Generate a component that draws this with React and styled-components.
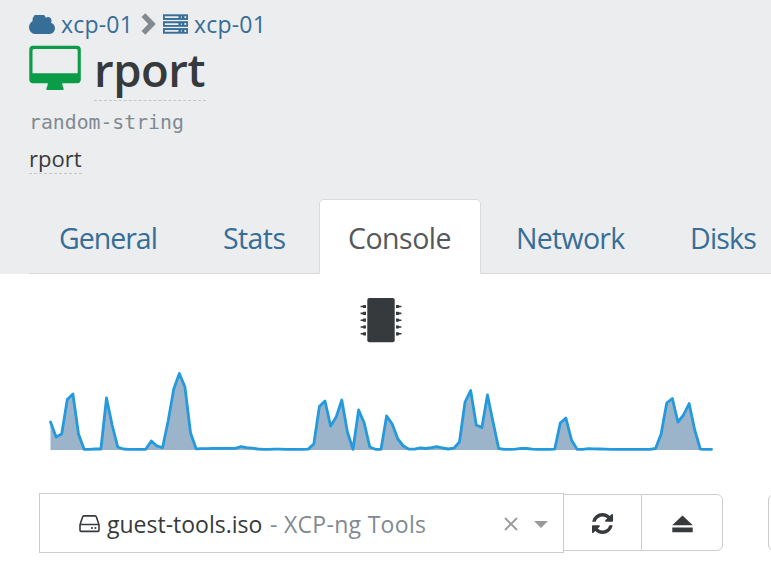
import React from "react";
import styled, { createGlobalStyle } from "styled-components";

const GlobalStyle = createGlobalStyle`
  * { box-sizing: border-box; }
  html, body { margin: 0; padding: 0; background: #fff; overflow: hidden; }
  body { font-family: "Open Sans", "Noto Sans", sans-serif; color: #373a3c; }
`;

const Page = styled.div`
  width: 771px;
  height: 570px;
  overflow: hidden;
  background: #fff;
`;

const Header = styled.header`
  height: 274px;
  padding: 10px 0 0 29px;
  background: #ecedef;
  display: flex;
  flex-direction: column;
`;

const Icon = styled.svg`
  display: block;
  flex: none;
  width: ${(p) => p.$w}px;
  height: ${(p) => p.$h}px;
  fill: currentColor;
  color: ${(p) => p.$color || "inherit"};
`;

const Breadcrumb = styled.nav`
  display: flex;
  align-items: center;
  height: 28px;
`;

const Crumb = styled.a`
  display: flex;
  align-items: center;
  gap: 6px;
  width: ${(p) => p.$width}px;
  color: #366e98;
  font-size: 23px;
  line-height: 28px;
  letter-spacing: 0.2px;
  white-space: nowrap;
`;

const Separator = styled.span`
  display: flex;
  width: 22px;
`;

const TitleRow = styled.div`
  display: flex;
  height: 63px;
  padding-top: 7px;
  gap: 13px;
`;

const Title = styled.h1`
  margin: 0;
  width: 112px;
  height: 56px;
  border-bottom: 1px dashed #c4c6c8;
  font-size: 45.5px;
  font-weight: 600;
  line-height: 49px;
  letter-spacing: -0.5px;
  white-space: nowrap;
`;

const Tag = styled.code`
  height: 42px;
  color: #818a91;
  font-family: "DejaVu Sans Mono", monospace;
  font-size: 19.8px;
  line-height: 43px;
`;

const Description = styled.span`
  align-self: flex-start;
  width: 53px;
  height: 31px;
  border-bottom: 1px dashed #c4c6c8;
  font-size: 22px;
  line-height: 31px;
  white-space: nowrap;
`;

const Tabs = styled.nav`
  display: flex;
  height: 75px;
  margin-top: auto;
  border-bottom: 1px solid #d9dbdd;
`;

const Tab = styled.a`
  flex: none;
  width: ${(p) => p.$width}px;
  height: 75px;
  padding-left: ${(p) => p.$pad}px;
  border: 1px solid ${(p) => (p.$active ? "#d9dbdd" : "transparent")};
  border-bottom-color: ${(p) => (p.$active ? "#fff" : "transparent")};
  border-radius: 5px 5px 0 0;
  background: ${(p) => (p.$active ? "#fff" : "transparent")};
  color: ${(p) => (p.$active ? "#55595c" : "#366e98")};
  font-size: 28.5px;
  line-height: 76px;
  letter-spacing: ${(p) => p.$track}px;
  white-space: nowrap;
`;

const Console = styled.main`
  display: flex;
  flex-direction: column;
  height: 296px;
`;

const ChipRow = styled.div`
  display: flex;
  height: 94px;
  padding: 23px 0 0 360px;
`;

const Chart = styled.svg`
  display: block;
  flex: none;
  width: 771px;
  height: 90px;
`;

const Controls = styled.div`
  display: flex;
  align-items: flex-start;
  margin-top: 35px;
  padding-left: 39px;
`;

const Select = styled.div`
  display: flex;
  flex: none;
  align-items: center;
  width: 525px;
  height: 60px;
  padding: 1px 15px 0 39px;
  border: 1px solid #ccc;
  color: #373a3c;
  font-size: 23px;
  white-space: nowrap;
`;

const IsoName = styled.span`
  width: 163px;
  margin-left: 7px;
`;

const IsoRepo = styled.span`
  flex: 1;
  color: #818a91;
  letter-spacing: 0.3px;
`;

const Caret = styled.span`
  width: 0;
  height: 0;
  margin: 2px 0 0 16px;
  border: 7px solid transparent;
  border-top-color: #999;
  border-bottom-width: 0;
`;

const ToolButton = styled.button`
  display: flex;
  flex: none;
  align-items: center;
  justify-content: center;
  width: ${(p) => p.$width}px;
  height: 57px;
  margin: 1px 0 0 ${(p) => p.$offset || 0}px;
  padding: 2px 0 0;
  border: 1px solid #ccc;
  border-left-width: ${(p) => (p.$joined ? 0 : 1)}px;
  border-right-width: ${(p) => (p.$joined ? 0 : 1)}px;
  border-radius: ${(p) => p.$radius || "0"};
  background: #fff;
  color: #373a3c;
`;

const SAMPLES = [
  422, 437, 434, 399.5, 394, 434, 449.3, 449.3, 449, 449, 398, 425, 447, 449,
  449.3, 449.3, 449.3, 449.3, 441, 446, 447.7, 421, 389, 373.5, 387, 433, 448.8,
  448.7, 448.7, 448.4, 448.3, 448.3, 448.3, 448.3, 446.5, 447.7, 448.2, 449,
  449.3, 449.3, 449.1, 449.1, 449.3, 449.3, 449.3, 449.3, 449.1, 444, 406.5,
  401, 426, 417, 400, 432, 449.3, 410, 423, 447, 449.3, 449.3, 416, 424, 439,
  446, 449.2, 449.2, 447.9, 448.5, 447.7, 446.6, 448, 449, 448.2, 442, 402,
  390.5, 425, 427.5, 395, 422, 448.5, 449.3, 449.3, 449.1, 448.3, 448.5, 449.1,
  449.3, 449.3, 449.3, 449.2, 423, 418, 440, 449.3, 449.3, 448.6, 448.8, 449,
  449.2, 449.3, 449.3, 449.3, 449.3, 449.3, 449.3, 449.3, 449.3, 448.5, 434,
  403, 398.5, 422, 415, 403.5, 430, 449.1, 449.3, 449.3,
];

const FIRST_X = 50.5;
const STEP = 5.602;
const linePath = SAMPLES.map(
  (y, i) => `${i ? "L" : "M"}${(FIRST_X + i * STEP).toFixed(2)} ${y}`
).join("");

const CloudIcon = () => (
  <Icon $w={26} $h={19} viewBox="64 256 1920 1280" preserveAspectRatio="none">
    <path d="M1984 1152q0 159-112.5 271.5t-271.5 112.5h-1088q-185 0-316.5-131.5t-131.5-316.5q0-132 71-241.5t187-163.5q-2-28-2-43 0-212 150-362t362-150q158 0 286.5 88t187.5 230q70-62 166-62 106 0 181 75t75 181q0 75-41 138 129 30 213 134.5t84 239.5z" />
  </Icon>
);

const ChevronIcon = () => (
  <Icon $w={15} $h={22} $color="#818a91" viewBox="0 0 15 22">
    <path d="M4.3.3 14.8 11 4.3 21.7.5 17.9 7.3 11 .5 4.1z" />
  </Icon>
);

const ServerIcon = () => (
  <Icon $w={25} $h={20} viewBox="0 0 25 20">
    {[0.3, 7.2, 14.1].map((y) => (
      <g key={y}>
        <path d={`M0 ${y}h25v5.6H0z`} />
        <path
          fill="#ecedef"
          d={`M1.8 ${y + 2}h13.7v1.7H1.8zM17.8 ${y + 2.2}h1.2v1.3h-1.2zM21.4 ${y + 1.9}h1.8v1.9h-1.8z`}
        />
      </g>
    ))}
  </Icon>
);

const DesktopIcon = () => (
  <Icon $w={52} $h={45} $color="#0a9c47" viewBox="0 0 52 45">
    <path
      fillRule="evenodd"
      d="M4 .8h44Q51.8.8 51.8 4.6v29.7q0 3.9-3.8 3.9H33.1q.3 2.8 1.3 4.5.7 1.2-.2 2.3H17.8q-.9-1.1-.2-2.3 1-1.7 1.3-4.5H4Q.3 38.2.3 34.3V4.6Q.3.8 4 .8zM5 3.9Q3.5 3.9 3.5 5.4v22.9h45.2V5.4q0-1.5-1.5-1.5z"
    />
  </Icon>
);

const ChipIcon = () => (
  <Icon $w={42} $h={46} viewBox="0 0 42 46">
    <rect x="7.3" y="1" width="27.4" height="44.2" rx="2" />
    {[9.5, 16.4, 23.2, 30, 36.8].map((y) => (
      <path
        key={y}
        d={`M6 ${y - 1.6}v3.2H3.5l-1-.8H.6v-1.6h1.9l1-.8zM36 ${y - 1.6}v3.2h2.5l1-.8h1.9v-1.6h-1.9l-1-.8z`}
      />
    ))}
  </Icon>
);

const DriveIcon = () => (
  <Icon $w={21} $h={18} viewBox="0 0 21 18">
    <path
      fill="none"
      stroke="currentColor"
      strokeWidth="1.6"
      strokeLinejoin="round"
      d="M1 10v5.2q0 1.2 1.2 1.2h16.6q1.2 0 1.2-1.2V10q0-.5-.3-1.2L17.4 2Q17 .9 15.9.9H5.1Q4 .9 3.6 2L1.3 8.8Q1 9.5 1 10zM1.2 9.5h18.6"
    />
    <circle cx="13" cy="13" r="1.05" />
    <circle cx="16.4" cy="13" r="1.05" />
  </Icon>
);

const ClearIcon = () => (
  <Icon $w={14} $h={14} viewBox="0 0 14 14">
    <path stroke="#999" strokeWidth="1.8" d="M1 1l12 12M13 1L1 13" />
  </Icon>
);

const RefreshIcon = () => (
  <Icon $w={21} $h={21} viewBox="0 0 1536 1536">
    <path d="M1511 928q0 5-1 7-64 268-268 434.5t-478 166.5q-146 0-282.5-55t-243.5-157l-129 129q-19 19-45 19t-45-19-19-45v-448q0-26 19-45t45-19h448q26 0 45 19t19 45-19 45l-137 137q71 66 161 102t187 36q134 0 250-65t186-179q11-17 53-117 8-23 30-23h192q13 0 22.5 9.5t9.5 22.5zm25-800v448q0 26-19 45t-45 19h-448q-26 0-45-19t-19-45 19-45l138-138q-148-137-349-137-134 0-250 65t-186 179q-11 17-53 117-8 23-30 23h-199q-13 0-22.5-9.5t-9.5-22.5v-7q65-268 270-434.5t480-166.5q146 0 284 55.5t245 156.5l130-129q19-19 45-19t45 19 19 45z" />
  </Icon>
);

const EjectIcon = () => (
  <Icon $w={21} $h={18} viewBox="0 0 21 18">
    <path d="M10.5.5 20.8 10.2H.2zM.3 12.4h20.4v4.8H.3z" />
  </Icon>
);

export default function App() {
  return (
    <Page>
      <GlobalStyle />
      <Header>
        <Breadcrumb>
          <Crumb $width={112}>
            <CloudIcon />
            <span>xcp-01</span>
          </Crumb>
          <Separator>
            <ChevronIcon />
          </Separator>
          <Crumb $width={110}>
            <ServerIcon />
            <span>xcp-01</span>
          </Crumb>
        </Breadcrumb>
        <TitleRow>
          <DesktopIcon />
          <Title>rport</Title>
        </TitleRow>
        <Tag>random-string</Tag>
        <Description>rport</Description>
        <Tabs>
          <Tab $width={163} $pad={29} $track={-1}>General</Tab>
          <Tab $width={127} $pad={30} $track={-0.6}>Stats</Tab>
          <Tab $active $width={162} $pad={28} $track={-0.5}>Console</Tab>
          <Tab $width={174} $pad={34} $track={-0.7}>Network</Tab>
          <Tab $width={116} $pad={34} $track={-0.8}>Disks</Tab>
        </Tabs>
      </Header>
      <Console>
        <ChipRow>
          <ChipIcon />
        </ChipRow>
        <Chart viewBox="0 368 771 90">
          <path d={`${linePath}V450H${FIRST_X}Z`} fill="#9bb4ca" />
          <path
            d={linePath}
            fill="none"
            stroke="#2499dc"
            strokeWidth="2.8"
            strokeLinejoin="round"
            strokeLinecap="round"
          />
        </Chart>
        <Controls>
          <Select>
            <DriveIcon />
            <IsoName>guest-tools.iso</IsoName>
            <IsoRepo>- XCP-ng Tools</IsoRepo>
            <ClearIcon />
            <Caret />
          </Select>
          <ToolButton $joined $width={77}>
            <RefreshIcon />
          </ToolButton>
          <ToolButton $width={82} $radius="0 6px 6px 0">
            <EjectIcon />
          </ToolButton>
          <ToolButton $width={82} $offset={45} $radius="6px 0 0 6px" />
        </Controls>
      </Console>
    </Page>
  );
}
